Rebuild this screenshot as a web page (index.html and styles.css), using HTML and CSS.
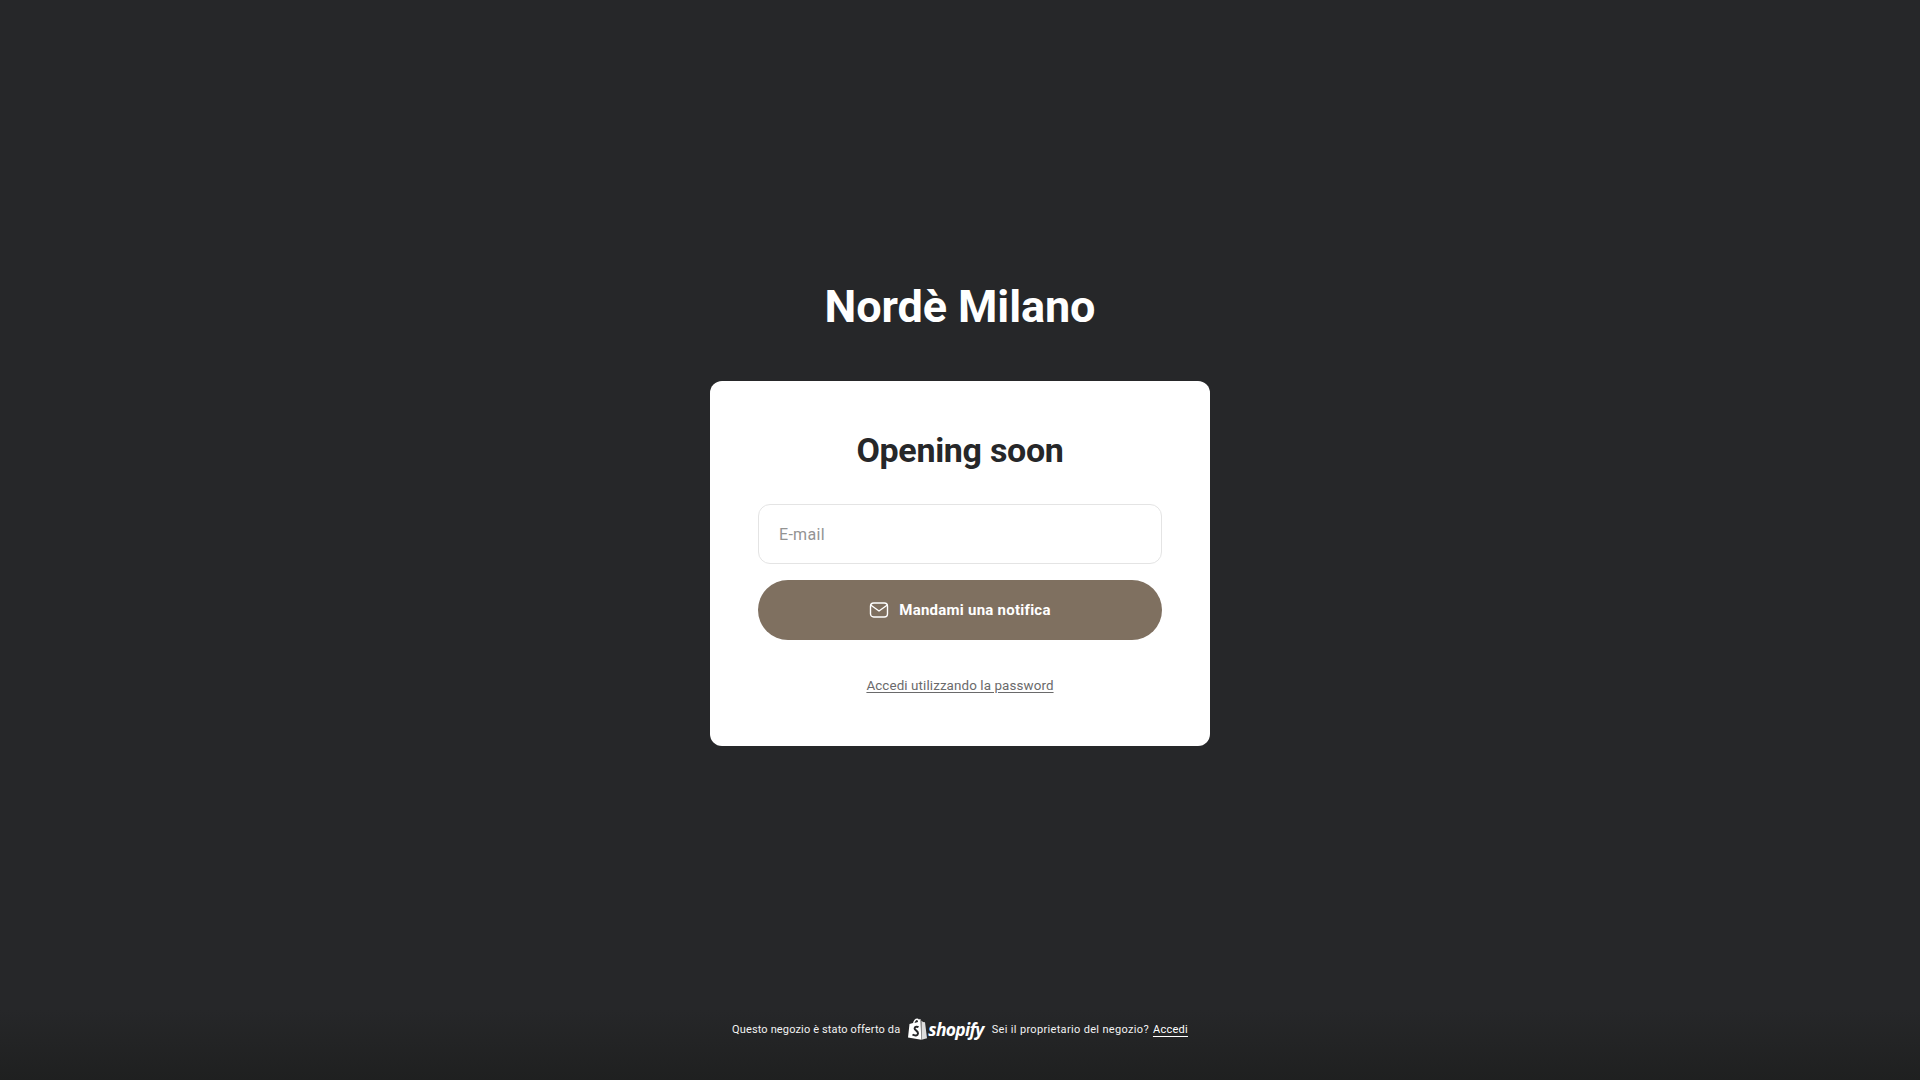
FILE: index.html
```html
<!DOCTYPE html>
<html lang="it">
<head>
<meta charset="utf-8">
<title>Nordè Milano</title>
<link rel="stylesheet" href="styles.css">
</head>
<body>
<main class="main">
  <h1 class="brand">Nordè Milano</h1>
  <section class="card">
    <h2 class="card-title">Opening soon</h2>
    <form class="form">
      <input class="email" type="email" placeholder="E-mail">
      <button class="notify" type="button">
        <svg class="mail" viewBox="0 0 20 20" fill="none" stroke="currentColor" stroke-width="1.4" stroke-linejoin="round" stroke-linecap="round"><rect x="1.5" y="3" width="17" height="14" rx="3.2"/><path d="M2 5.2 10 11l8-5.8"/></svg>
        <span>Mandami una notifica</span>
      </button>
    </form>
    <a class="password" href="#">Accedi utilizzando la password</a>
  </section>
</main>
<footer class="footer">
  <span class="offered">Questo negozio è stato offerto da</span>
  <a class="shopify" href="#">
    <svg class="bag" viewBox="0 0 19 22">
      <path fill="#fff" d="M5 5C5.600 2.500 7.200.5 9.200.5c.8 0 1.300.4 1.600 1L12.500 1 13.300 21.800 0 19.500 1.500 6Z"/>
      <path fill="#dcdcdc" d="M13.400 2.500 15 4l2 .2 2 16.100-5.500 1.500Z"/>
      <path fill="#262729" d="M6.500 5C7 3.400 7.800 2.200 9 2c.8.300 1 1.500 1 2Z"/>
      <path fill="none" stroke="#262729" stroke-width="2" d="M10.500 9.200C9.500 8.600 6.800 8.300 6.600 10.300 6.400 12.300 10.300 12.500 10 15.500 9.800 17.800 6.800 18 4.500 16.500"/>
    </svg>
    <span class="wordmark">shopify</span>
  </a>
  <span class="owner">Sei il proprietario del negozio?</span>
  <a class="login" href="#">Accedi</a>
</footer>
</body>
</html>
```
FILE: styles.css
```css
* { box-sizing: border-box; }
html, body { height: 100%; }
body {
  margin: 0;
  height: 1080px;
  display: flex;
  flex-direction: column;
  font-family: Roboto, "Liberation Sans", sans-serif;
  background: linear-gradient(to bottom, #262729 0, #262729 1010px, #1f2020 1080px);
  color: #fff;
  overflow: hidden;
}
.main {
  display: flex;
  flex-direction: column;
  align-items: center;
  padding-top: 278px;
  flex: 1;
}
.brand {
  margin: 0 0 45px;
  height: 58px;
  line-height: 58px;
  font-size: 45px;
  font-weight: 700;
  letter-spacing: -0.1px;
}
.card {
  width: 500px;
  height: 365px;
  padding: 48px;
  background: #fff;
  border-radius: 12px;
  display: flex;
  flex-direction: column;
  align-items: center;
}
.card-title {
  margin: 0 0 32px;
  height: 43px;
  line-height: 43px;
  font-size: 34px;
  font-weight: 700;
  letter-spacing: -0.3px;
  color: #262729;
}
.form {
  width: 100%;
  display: flex;
  flex-direction: column;
  gap: 16px;
}
.email {
  width: 100%;
  height: 60px;
  padding: 0 20px;
  border: 1px solid #e4e4e4;
  border-radius: 12px;
  font: 400 16px Roboto, sans-serif;
  letter-spacing: 0.3px;
  color: #262729;
  outline: none;
}
.email::placeholder { color: #939393; opacity: 1; }
.notify {
  width: 100%;
  height: 60px;
  border: 0;
  border-radius: 30px;
  background: #7f7060;
  color: #fff;
  display: flex;
  align-items: center;
  justify-content: center;
  gap: 10px;
  font: 700 15px Roboto, sans-serif;
  letter-spacing: 0.25px;
}
.mail { width: 20px; height: 20px; }
.password {
  margin-top: 38px;
  font-size: 13.4px;
  letter-spacing: 0.1px;
  color: #6a6a6b;
  text-decoration: underline;
  text-underline-offset: 2px;
}
.footer {
  height: 102px;
  display: flex;
  align-items: center;
  justify-content: center;
  font-size: 11px;
  letter-spacing: 0.27px;
  color: #f2f2f2;
}
.offered { letter-spacing: 0.14px; }
.owner { letter-spacing: 0.33px; }
.shopify {
  display: flex;
  align-items: center;
  gap: 1px;
  margin: 0 8px;
  color: #fff;
  text-decoration: none;
}
.bag { width: 19px; height: 22px; }
.wordmark {
  font-family: "Open Sans", sans-serif;
  font-size: 17.5px;
  font-weight: 700;
  font-style: italic;
  letter-spacing: -0.7px;
}
.login {
  margin-left: 4px;
  color: #fff;
  text-decoration: underline;
  text-underline-offset: 3px;
}
```
